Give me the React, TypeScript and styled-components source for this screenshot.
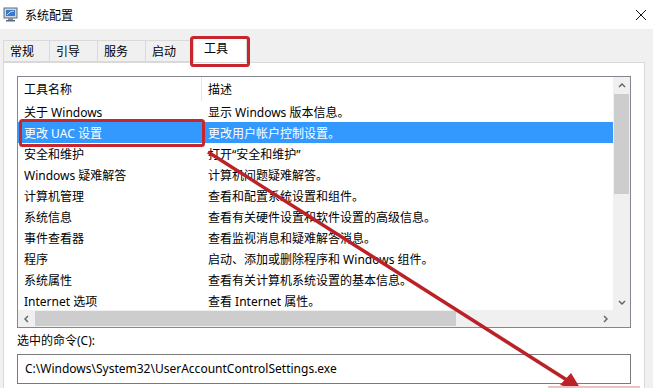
import styled, { createGlobalStyle } from 'styled-components'

const Global = createGlobalStyle`
  html, body {
    margin: 0;
    padding: 0;
    background: #f0f0f0;
    overflow: hidden;
  }
  body {
    font-family: "Noto Sans", "Noto Sans CJK SC", "Liberation Sans", sans-serif;
    font-size: 12px;
    color: #000;
  }
`

const Window = styled.div`
  position: relative;
  width: 653px;
  height: 388px;
  overflow: hidden;
  background: #f0f0f0;
  display: flex;
  flex-direction: column;
`

const TitleBar = styled.div`
  height: 29px;
  background: #fff;
  display: flex;
  align-items: center;
  padding-left: 3px;
  flex-shrink: 0;
`

const TitleText = styled.span`
  margin-left: 6px;
  font-size: 12px;
  margin-top: 1px;
`

const CloseBtn = styled.div`
  margin-left: auto;
  width: 24px;
  height: 29px;
  display: flex;
  align-items: center;
  justify-content: center;
`

const TabStrip = styled.div`
  display: flex;
  align-items: flex-end;
  height: 33px;
  padding-left: 3px;
  flex-shrink: 0;
`

const Tab = styled.div<{ $w: number; $active?: boolean }>`
  width: ${p => p.$w}px;
  height: ${p => (p.$active ? 26 : 22)}px;
  box-sizing: border-box;
  border: 1px solid #d9d9d9;
  border-bottom: ${p => (p.$active ? 'none' : '1px solid #d9d9d9')};
  border-left: ${p => (p.$active ? '1px solid #d9d9d9' : 'none')};
  background: ${p => (p.$active ? '#fff' : '#f0f0f0')};
  display: flex;
  align-items: center;
  padding-left: ${p => (p.$active ? 10 : 6)}px;
  padding-bottom: ${p => (p.$active ? 4 : 0)}px;
  margin-left: ${p => (p.$active ? 2 : 0)}px;
  &:first-child {
    border-left: 1px solid #d9d9d9;
  }
`

const Panel = styled.div`
  flex: 1;
  margin-left: 3px;
  margin-right: 8px;
  background: #fff;
  border: 1px solid #d9d9d9;
  border-bottom: none;
  padding: 13px 13px 0 13px;
  display: flex;
  flex-direction: column;
`

const ListBox = styled.div`
  height: 252px;
  box-sizing: border-box;
  border: 1px solid #828790;
  display: grid;
  grid-template-columns: 1fr 17px;
  grid-template-rows: 1fr 17px;
  overflow: hidden;
`

const ListBody = styled.div`
  overflow: hidden;
  display: flex;
  flex-direction: column;
`

const Row = styled.div<{ $selected?: boolean; $header?: boolean }>`
  display: grid;
  grid-template-columns: 184px 1fr;
  height: ${p => (p.$header ? 24 : 21)}px;
  flex-shrink: 0;
  align-items: center;
  background: ${p => (p.$selected ? '#3399ff' : 'transparent')};
  color: ${p => (p.$selected ? '#fff' : '#000')};
`

const Cell = styled.div<{ $divider?: boolean }>`
  padding-left: 6px;
  white-space: nowrap;
  height: 100%;
  display: flex;
  align-items: center;
  border-right: ${p => (p.$divider ? '1px solid #e5e5e5' : 'none')};
`

const VScroll = styled.div`
  background: #f0f0f0;
  display: flex;
  flex-direction: column;
  align-items: center;
`

const HScroll = styled.div`
  background: #f0f0f0;
  display: flex;
  align-items: center;
`

const Arrow = styled.div`
  width: 17px;
  height: 17px;
  flex-shrink: 0;
  display: flex;
  align-items: center;
  justify-content: center;
`

const VThumb = styled.div`
  width: 15px;
  height: 100px;
  background: #cdcdcd;
`

const Gap = styled.div`
  flex: 1;
`

const HThumb = styled.div`
  height: 15px;
  width: 421px;
  background: #cdcdcd;
`

const Corner = styled.div`
  background: #f0f0f0;
`

const Label = styled.div`
  margin-top: 2px;
  height: 20px;
  display: flex;
  align-items: center;
`

const CommandBox = styled.div`
  margin-top: 4px;
  height: 30px;
  box-sizing: border-box;
  border: 1px solid #7a7a7a;
  display: flex;
  align-items: center;
  padding-left: 7px;
  padding-bottom: 2px;
`

const Overlay = styled.svg`
  position: absolute;
  left: 0;
  top: 0;
  pointer-events: none;
`

const tools: [string, string][] = [
  ['关于 Windows', '显示 Windows 版本信息。'],
  ['更改 UAC 设置', '更改用户帐户控制设置。'],
  ['安全和维护', '打开“安全和维护”'],
  ['Windows 疑难解答', '计算机问题疑难解答。'],
  ['计算机管理', '查看和配置系统设置和组件。'],
  ['系统信息', '查看有关硬件设置和软件设置的高级信息。'],
  ['事件查看器', '查看监视消息和疑难解答消息。'],
  ['程序', '启动、添加或删除程序和 Windows 组件。'],
  ['系统属性', '查看有关计算机系统设置的基本信息。'],
  ['Internet 选项', '查看 Internet 属性。'],
]

const Chevron = ({ dir }: { dir: 'up' | 'down' | 'left' | 'right' }) => {
  const d = {
    up: 'M2 6 L5 3 L8 6',
    down: 'M2 4 L5 7 L8 4',
    left: 'M6 2 L3 5 L6 8',
    right: 'M4 2 L7 5 L4 8',
  }[dir]
  return (
    <svg width="10" height="10" viewBox="0 0 10 10">
      <path d={d} fill="none" stroke="#606060" strokeWidth="1.4" />
    </svg>
  )
}

const App = () => {
  return (
    <Window>
      <Global />
      <TitleBar>
        <svg width="16" height="15" viewBox="0 0 16 15">
          <rect x="1" y="1" width="13" height="10" fill="#cfd6e0" stroke="#5a6a80" />
          <rect x="3" y="3" width="9" height="6" fill="#3a78c8" />
          <path d="M4 8 L7 5 L11 4" stroke="#bfe0ff" fill="none" />
          <rect x="5" y="11" width="5" height="2" fill="#8090a0" />
          <rect x="3" y="13" width="9" height="1.5" fill="#5a6a80" />
        </svg>
        <TitleText>系统配置</TitleText>
        <CloseBtn>
          <svg width="12" height="12" viewBox="0 0 12 12">
            <path d="M1 1 L11 11 M11 1 L1 11" stroke="#111" strokeWidth="1" />
          </svg>
        </CloseBtn>
      </TitleBar>
      <TabStrip>
        <Tab $w={47}>常规</Tab>
        <Tab $w={48}>引导</Tab>
        <Tab $w={48}>服务</Tab>
        <Tab $w={45}>启动</Tab>
        <Tab $w={54} $active>工具</Tab>
      </TabStrip>
      <Panel>
        <ListBox>
          <ListBody>
            <Row $header>
              <Cell $divider>工具名称</Cell>
              <Cell>描述</Cell>
            </Row>
            {tools.map(([name, desc], i) => (
              <Row key={name} $selected={i === 1}>
                <Cell>{name}</Cell>
                <Cell>{desc}</Cell>
              </Row>
            ))}
          </ListBody>
          <VScroll>
            <Arrow><Chevron dir="up" /></Arrow>
            <VThumb />
            <Gap />
            <Arrow><Chevron dir="down" /></Arrow>
          </VScroll>
          <HScroll>
            <Arrow><Chevron dir="left" /></Arrow>
            <HThumb />
            <Gap />
            <Arrow><Chevron dir="right" /></Arrow>
          </HScroll>
          <Corner />
        </ListBox>
        <Label>选中的命令(C):</Label>
        <CommandBox>C:\Windows\System32\UserAccountControlSettings.exe</CommandBox>
      </Panel>
      <Overlay width="653" height="388" viewBox="0 0 653 388">
        <rect x="191.5" y="37.5" width="57" height="28" rx="2" fill="none" stroke="#c8262c" strokeWidth="3" />
        <rect x="20.5" y="120.5" width="183" height="25" rx="2" fill="none" stroke="#c8262c" strokeWidth="3" />
        <line x1="208" y1="152" x2="570" y2="382" stroke="#bb2228" strokeWidth="3.5" />
        <path d="M582 391 L560 385 L571 373 Z" fill="#bb2228" />
        <line x1="548" y1="387" x2="640" y2="387" stroke="#f0c0c0" strokeWidth="2" />
      </Overlay>
    </Window>
  )
}

export default App
